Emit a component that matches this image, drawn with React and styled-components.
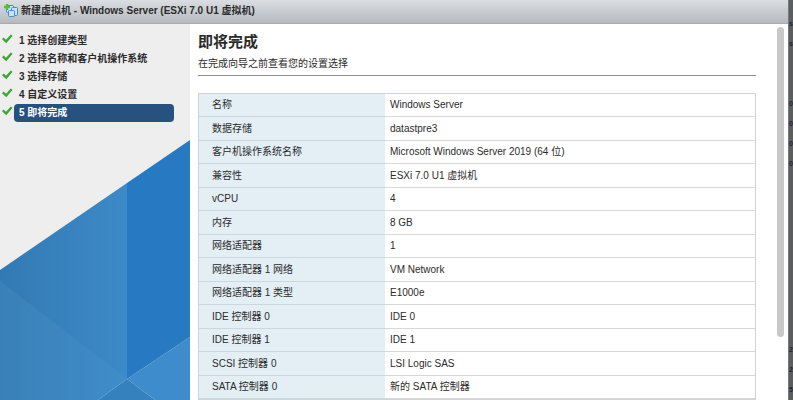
import React from "react"
import styled, { createGlobalStyle } from "styled-components"

const GlobalStyle = createGlobalStyle`
  * {
    box-sizing: border-box;
  }

  body {
    margin: 0;
    overflow: hidden;
    background: #5c5d5e;
    color: #2b2b2b;
    font-family: "Liberation Sans", "Noto Sans CJK SC", sans-serif;
    font-size: 10px;
    line-height: 18px;
  }
`

const Page = styled.div`
  display: flex;
  height: 100vh;
  overflow: hidden;
`

const Dialog = styled.main`
  display: flex;
  flex: 1;
  flex-direction: column;
  min-width: 0;
  background: #fff;
`

const TitleBar = styled.header`
  display: flex;
  flex: none;
  align-items: center;
  gap: 3px;
  height: 24px;
  padding: 0 4px 2px;
  border-bottom: 1px solid #a9abad;
  background: linear-gradient(#dadde1, #b6babf);
`

const Title = styled.h1`
  margin: 0;
  font-size: 10px;
  font-weight: bold;
`

const Body = styled.div`
  display: flex;
  flex: 1;
  min-height: 0;
`

const Sidebar = styled.nav`
  display: flex;
  flex: none;
  flex-direction: column;
  justify-content: space-between;
  width: 190px;
  padding-top: 8px;
  background: #eee;
`

const Steps = styled.ol`
  margin: 0;
  padding: 0;
  list-style: none;
`

const Step = styled.li`
  display: flex;
  gap: 1px;
  height: 18px;
  padding-left: 2px;
`

const StepLink = styled.a`
  width: 160px;
  padding-left: 5px;
  border-radius: 4px;
  background: ${props => (props.$active ? "#27517f" : "transparent")};
  color: ${props => (props.$active ? "#fff" : "#2b2b2b")};
  font-weight: bold;
  text-decoration: none;
`

const Artwork = styled.svg`
  display: block;
  width: 100%;
`

const Content = styled.section`
  flex: 1;
  min-width: 0;
  padding: 8px 21px 0 8px;
  overflow: hidden;
`

const Heading = styled.h2`
  margin: 0;
  font-size: 15px;
  line-height: 20px;
`

const Hint = styled.p`
  margin: 0 0 17px;
  padding: 3px 0 2px;
  border-bottom: 1px solid #8f8f8f;
`

const Summary = styled.table`
  width: 100%;
  border: 1px solid #d0d4d6;
  border-spacing: 0;
  line-height: 16px;
`

const Row = styled.tr`
  height: 23px;

  &:nth-child(even) {
    height: 24px;
  }
`

const Label = styled.th`
  width: 186px;
  padding: 0 0 0 13px;
  border-bottom: 1px solid #cdd8de;
  background: #e3eef5;
  font-weight: normal;
  text-align: left;
`

const Value = styled.td`
  padding: 0 5px;
  border-bottom: 1px solid #d8d8d8;
`

const ScrollTrack = styled.div`
  flex: none;
  width: 11px;
  padding-top: 3px;
`

const ScrollThumb = styled.div`
  width: 7px;
  height: 83%;
  border-radius: 4px;
  background: #c8c8c8;
`

const Backdrop = styled.aside`
  display: flex;
  flex: none;
  flex-direction: column;
  justify-content: space-between;
  width: 5px;
  padding-top: 14px;
  border-left: 1px solid #77797a;
  background: #5c5d5e;
  color: #1d2836;
  font-size: 7px;
  font-weight: bold;
  line-height: 20px;
`

const BackdropGroup = styled.div`
  display: flex;
  flex-direction: column;
`

const steps = [
  "选择创建类型",
  "选择名称和客户机操作系统",
  "选择存储",
  "自定义设置",
  "即将完成",
]

const settings = [
  ["名称", "Windows Server"],
  ["数据存储", "datastpre3"],
  ["客户机操作系统名称", "Microsoft Windows Server 2019 (64 位)"],
  ["兼容性", "ESXi 7.0 U1 虚拟机"],
  ["vCPU", "4"],
  ["内存", "8 GB"],
  ["网络适配器", "1"],
  ["网络适配器 1 网络", "VM Network"],
  ["网络适配器 1 类型", "E1000e"],
  ["IDE 控制器 0", "IDE 0"],
  ["IDE 控制器 1", "IDE 1"],
  ["SCSI 控制器 0", "LSI Logic SAS"],
  ["SATA 控制器 0", "新的 SATA 控制器"],
]

// what shows of the page behind the dialog
const behind = [
  ["s", "s", "", "", "0", "0", "0", "0"],
  ["2", "2", "5"],
]

const NewVmIcon = () => (
  <svg width="14" height="14" viewBox="0 0 14 14" aria-hidden="true">
    <g fill="#c9e3f6" stroke="#3d8fd0">
      <rect x="2.5" y="1.5" width="7" height="7" rx="1" />
      <rect x="7.5" y="3.5" width="6" height="8" rx="1" />
      <rect x="4.5" y="6.5" width="6" height="6" rx="1" />
    </g>
    <path d="M3 0v6M0 3h6" stroke="#58b947" strokeWidth="2.4" />
  </svg>
)

const Check = () => (
  <svg width="11" height="13" viewBox="0 0 11 13" aria-hidden="true">
    <path
      d="M0 7.2 1.6 5.6l2.4 2.1L8.8 2.6 10.6 3.7 4.3 11.2Z"
      fill="#3fa535"
    />
  </svg>
)

const App = () => (
  <>
    <GlobalStyle />
    <Page>
      <Dialog>
        <TitleBar>
          <NewVmIcon />
          <Title>新建虚拟机 - Windows Server (ESXi 7.0 U1 虚拟机)</Title>
        </TitleBar>
        <Body>
          <Sidebar>
            <Steps>
              {steps.map((step, index) => (
                <Step key={step}>
                  <Check />
                  <StepLink
                    href={`#step-${index + 1}`}
                    $active={index === steps.length - 1}
                  >
                    {index + 1} {step}
                  </StepLink>
                </Step>
              ))}
            </Steps>
            <Artwork viewBox="0 0 190 260" aria-hidden="true">
              <defs>
                <linearGradient id="upper">
                  <stop offset="0" stopColor="#327ab3" />
                  <stop offset="1" stopColor="#3d8ac8" />
                </linearGradient>
                <linearGradient id="lower">
                  <stop offset="0" stopColor="#3a80b8" />
                  <stop offset="1" stopColor="#3f8dca" />
                </linearGradient>
              </defs>
              <path d="M0 130 127 43V240L0 142Z" fill="url(#upper)" />
              <path d="M0 141 127 239 98 260H0Z" fill="url(#lower)" />
              <path d="M127 43 190 0V197L127 239Z" fill="#277ac1" />
              <path d="M127 239 190 197V260H155Z" fill="#3e8ccb" />
              <path d="M127 239 155 260H98Z" fill="#3581bd" />
            </Artwork>
          </Sidebar>
          <Content>
            <Heading>即将完成</Heading>
            <Hint>在完成向导之前查看您的设置选择</Hint>
            <Summary>
              <tbody>
                {settings.map(([label, value]) => (
                  <Row key={label}>
                    <Label scope="row">{label}</Label>
                    <Value>{value}</Value>
                  </Row>
                ))}
              </tbody>
            </Summary>
          </Content>
          <ScrollTrack>
            <ScrollThumb />
          </ScrollTrack>
        </Body>
      </Dialog>
      <Backdrop aria-hidden="true">
        {behind.map((group, index) => (
          <BackdropGroup key={index}>
            {group.map((text, line) => (
              <span key={line}>{text || "\u00a0"}</span>
            ))}
          </BackdropGroup>
        ))}
      </Backdrop>
    </Page>
  </>
)

export default App
